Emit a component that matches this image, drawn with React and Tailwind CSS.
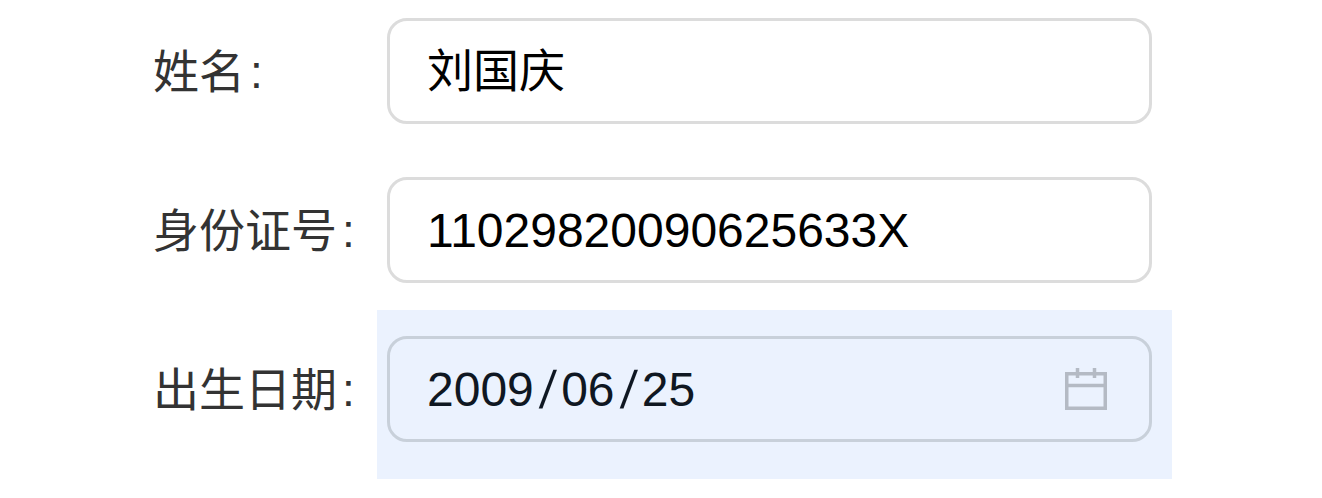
import React from 'react';

const font = "font-['Liberation_Sans','Noto_Sans_CJK_SC',sans-serif]";

const Calendar = () => (
  <svg width="42" height="42" viewBox="0 0 42 42" fill="none" stroke="#b4bac4" strokeWidth="3.5" className="shrink-0">
    <rect x="1.75" y="5.75" width="38.5" height="34.5" />
    <path d="M2 17.5h38M12.5 0v10M29.5 0v10" />
  </svg>
);

const Label = ({ text }) => (
  <span className="w-[234px] pt-[1px] text-[46px] leading-[52px] text-[#333] whitespace-nowrap">
    {text}
    <span className="ml-[5px]">:</span>
  </span>
);

const Slash = () => <span className="inline-block mx-[7px] -skew-x-[8deg] scale-y-[1.1] font-light">/</span>;

const App = () => {
  return (
    <div className={`w-[1322px] h-[498px] overflow-hidden bg-white pl-[153px] pt-[18px] flex flex-col gap-[53px] ${font}`}>
      <div className="flex items-center">
        <Label text="姓名" />
        <div className="w-[765px] h-[106px] flex items-center pl-[37px] pr-[38px] border-[3px] border-[#dcdcdc] rounded-[20px] bg-white text-[46px] text-black">
          刘国庆
        </div>
      </div>
      <div className="flex items-center">
        <Label text="身份证号" />
        <div className="w-[765px] h-[106px] flex items-center pl-[37px] pr-[38px] pt-[1px] border-[3px] border-[#dcdcdc] rounded-[20px] bg-white text-[48px] text-black">
          11029820090625633X
        </div>
      </div>
      <div className="flex items-center">
        <Label text="出生日期" />
        {/* autofill highlight is bigger than the field */}
        <div className="-ml-[10px] -mt-[26px] pl-[10px] pr-[20px] pt-[26px] pb-[37px] bg-[#ebf2fe] -mb-[37px]">
          <div className="w-[765px] h-[106px] flex items-center justify-between pl-[37px] pr-[42px] border-[3px] border-[#c8d0da] rounded-[20px] text-[48px] text-[#0f1722]">
            <span className="pt-[2px]">2009<Slash />06<Slash />25</span>
            <Calendar />
          </div>
        </div>
      </div>
    </div>
  );
};

export default App;
